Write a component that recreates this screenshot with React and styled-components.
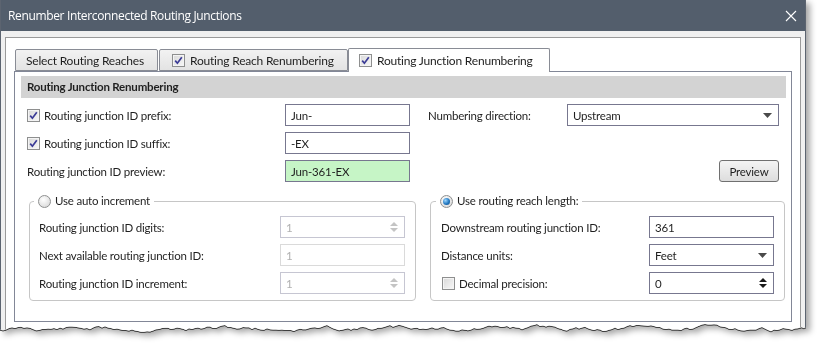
import React from 'react';
import styled, { createGlobalStyle } from 'styled-components';

const FONT = `Lato, "Open Sans", Arial, sans-serif`;
const TITLE_FONT = `"Open Sans", "Noto Sans", Arial, sans-serif`;

const GlobalStyle = createGlobalStyle`
  html, body {
    margin: 0;
    background: #fff;
  }
  body {
    font-family: ${FONT};
    font-size: 11.5px;
    letter-spacing: -0.2px;
    color: #1f1f1f;
  }
`;

// torn paper edge along the bottom of the screenshot
const tornEdge = (() => {
  let seed = 11;
  const rnd = () => {
    seed = (seed * 9301 + 49297) % 233280;
    return seed / 233280;
  };
  const pts = [];
  let y = 329;
  for (let x = 0; x <= 816; x += 3) {
    y += (rnd() - 0.5) * 3.2 + (328 - y) * 0.12;
    pts.push(`${x}px ${y.toFixed(1)}px`);
  }
  return `polygon(0 0, 816px 0, ${pts.reverse().join(', ')})`;
})();

const Shadow = styled.div`
  width: 816px;
  filter: drop-shadow(0 1px 0 rgba(50, 50, 50, 0.9)) drop-shadow(4px 3px 3px rgba(0, 0, 0, 0.35));
`;

const Window = styled.div`
  width: 806px;
  height: 344px;
  box-sizing: border-box;
  border-left: 1px solid #5c6470;
  border-right: 1px solid #5c6470;
  background: #f0f0f0;
  display: flex;
  flex-direction: column;
  clip-path: ${tornEdge};
`;

const TitleBar = styled.div`
  height: 31px;
  flex: none;
  background: #535e6c;
  color: #fff;
  display: flex;
  align-items: center;
  justify-content: space-between;
  padding: 0 8px 0 7px;
  font-family: ${TITLE_FONT};
  font-size: 12px;
  letter-spacing: -0.35px;
`;

const CloseIcon = () => (
  <svg width="12" height="12" viewBox="0 0 12 12">
    <path d="M1 1 L11 11 M11 1 L1 11" stroke="#fff" strokeWidth="1.1" fill="none" />
  </svg>
);

const Body = styled.div`
  flex: 1;
  padding: 6px 4px 0 4px;
  display: flex;
`;

const OuterPanel = styled.div`
  flex: 1;
  background: #fff;
  border: 1px solid #9a9a9a;
  border-bottom: none;
  padding: 10px 8px 0 8px;
`;

const TabStrip = styled.div`
  display: flex;
  align-items: flex-end;
  height: 23px;
  padding-left: 1px;
  gap: 1px;
`;

const Tab = styled.div`
  position: relative;
  box-sizing: border-box;
  width: ${p => p.$width}px;
  height: ${p => (p.$active ? 24 : 22)}px;
  margin-bottom: ${p => (p.$active ? -1 : 0)}px;
  margin-left: ${p => (p.$active ? -1 : 0)}px;
  z-index: ${p => (p.$active ? 1 : 0)};
  border: 1px solid #898c95;
  border-bottom: ${p => (p.$active ? 'none' : '1px solid #898c95')};
  border-radius: 2px 2px 0 0;
  background: ${p => (p.$active ? '#fff' : 'linear-gradient(#f2f2f2, #e3e3e3)')};
  display: flex;
  align-items: center;
  gap: 5px;
  padding-left: ${p => p.$pad}px;
  padding-bottom: ${p => (p.$active ? 1 : 0)}px;
  font-size: 12px;
  white-space: nowrap;
`;

const TabPanel = styled.div`
  border: 1px solid #828797;
  padding: 4px 5px 20px 6px;
`;

const SectionHeader = styled.div`
  height: 22px;
  line-height: 22px;
  background: #d3d3d3;
  padding-left: 6px;
  font-weight: 700;
`;

const FormGrid = styled.div`
  margin-top: 6px;
  padding-left: 6px;
  display: grid;
  grid-template-columns: 258px 125px 18px 139px 212px;
  grid-auto-rows: 22px;
  row-gap: 6px;
  align-items: center;
  grid-template-areas:
    'pfx pfxIn . dirL dir'
    'sfx sfxIn . . .'
    'prv prvIn . . btn';
`;

const Cell = styled.div`
  grid-area: ${p => p.$area};
  display: flex;
  align-items: center;
  gap: 4px;
  white-space: nowrap;
`;

const CheckBox = styled.span`
  width: 13px;
  height: 13px;
  flex: none;
  box-sizing: border-box;
  border: 1px solid #8e8f8f;
  box-shadow: inset 0 0 0 1px #f4f4f4;
  background: linear-gradient(135deg, #d8d8d8, #f8f8f8);
  display: inline-flex;
  align-items: center;
  justify-content: center;
  margin-left: ${p => p.$offset || 0}px;
`;

const Check = ({ checked, offset }) => (
  <CheckBox $offset={offset}>
    {checked && (
      <svg width="9" height="9" viewBox="0 0 9 9">
        <path d="M1.2 4.6 L3.4 7.2 L7.8 1.2" stroke="#3b3b96" strokeWidth="1.7" fill="none" />
      </svg>
    )}
  </CheckBox>
);

const Radio = styled.span`
  width: 13px;
  height: 13px;
  flex: none;
  box-sizing: border-box;
  border-radius: 50%;
  border: 1px solid #8e8f8f;
  background: radial-gradient(circle at 40% 35%, #ffffff, #d2d2d2);
  display: inline-flex;
  align-items: center;
  justify-content: center;

  &::after {
    content: '';
    display: ${p => (p.$checked ? 'block' : 'none')};
    width: 7px;
    height: 7px;
    border-radius: 50%;
    background: radial-gradient(circle at 35% 35%, #9bd6ff, #2277c0 55%, #0e4a84);
  }
`;

const TextBox = styled.div`
  grid-area: ${p => p.$area || 'auto'};
  height: 22px;
  box-sizing: border-box;
  border: 1px solid ${p => (p.$disabled ? (p.$faint ? '#dadada' : '#c6c6d2') : '#77778f')};
  background: ${p => (p.$ok ? '#c6f5c6' : '#fff')};
  color: ${p => (p.$disabled ? '#b0b0b0' : '#1f1f1f')};
  display: flex;
  align-items: center;
  justify-content: space-between;
  padding: 0 6px 0 5px;
`;

const Arrows = styled.span`
  display: flex;
  flex-direction: column;
  gap: 2px;
`;

const Spin = ({ color }) => (
  <Arrows>
    <svg width="8" height="4" viewBox="0 0 8 4">
      <polygon points="0,4 8,4 4,0" fill={color} />
    </svg>
    <svg width="8" height="4" viewBox="0 0 8 4">
      <polygon points="0,0 8,0 4,4" fill={color} />
    </svg>
  </Arrows>
);

const DropArrow = () => (
  <svg width="9" height="5" viewBox="0 0 9 5">
    <polygon points="0,0 9,0 4.5,5" fill="#4a4a4a" />
  </svg>
);

const Button = styled.button`
  grid-area: ${p => p.$area};
  justify-self: end;
  width: 60px;
  height: 22px;
  box-sizing: border-box;
  border: 1px solid #707070;
  border-radius: 3px;
  background: linear-gradient(#f4f4f4, #dddddd);
  font-family: ${FONT};
  font-size: 11.5px;
  letter-spacing: -0.2px;
  color: #1f1f1f;
  padding: 0;
`;

const GroupRow = styled.div`
  display: flex;
  gap: 14px;
  margin-top: 11px;
  padding-left: 8px;
`;

const Group = styled.fieldset`
  margin: 0;
  min-width: 0;
  width: ${p => p.$width}px;
  box-sizing: border-box;
  border: 1px solid #c6c6c6;
  border-radius: 4px;
  padding: 0 10px 6px ${p => p.$padLeft}px;
`;

const Legend = styled.legend`
  margin-left: -5px;
  padding: 0 4px;
  display: flex;
  align-items: center;
  gap: 4px;
  line-height: 16px;
`;

const GroupGrid = styled.div`
  margin-top: 7px;
  display: grid;
  grid-template-columns: 1fr 125px;
  grid-auto-rows: 22px;
  row-gap: 6px;
  align-items: center;
`;

const Label = styled.span`
  display: flex;
  align-items: center;
  gap: 4px;
  white-space: nowrap;
`;

export default function App() {
  return (
    <>
      <GlobalStyle />
      <Shadow>
        <Window>
          <TitleBar>
            <span>Renumber Interconnected Routing Junctions</span>
            <CloseIcon />
          </TitleBar>
          <Body>
            <OuterPanel>
              <TabStrip>
                <Tab $width={143} $pad={10}>Select Routing Reaches</Tab>
                <Tab $width={189} $pad={12}>
                  <Check checked /> Routing Reach Renumbering
                </Tab>
                <Tab $width={202} $pad={10} $active>
                  <Check checked /> Routing Junction Renumbering
                </Tab>
              </TabStrip>
              <TabPanel>
                <SectionHeader>Routing Junction Renumbering</SectionHeader>
                <FormGrid>
                  <Cell $area="pfx">
                    <Check checked /> Routing junction ID prefix:
                  </Cell>
                  <TextBox $area="pfxIn">Jun-</TextBox>
                  <Cell $area="dirL">Numbering direction:</Cell>
                  <TextBox $area="dir">
                    Upstream <DropArrow />
                  </TextBox>
                  <Cell $area="sfx">
                    <Check checked /> Routing junction ID suffix:
                  </Cell>
                  <TextBox $area="sfxIn">-EX</TextBox>
                  <Cell $area="prv">Routing junction ID preview:</Cell>
                  <TextBox $area="prvIn" $ok>Jun-361-EX</TextBox>
                  <Button $area="btn">Preview</Button>
                </FormGrid>
                <GroupRow>
                  <Group $width={387} $padLeft={9}>
                    <Legend>
                      <Radio /> Use auto increment
                    </Legend>
                    <GroupGrid>
                      <Label>Routing junction ID digits:</Label>
                      <TextBox $disabled>
                        1 <Spin color="#c4c4c4" />
                      </TextBox>
                      <Label>Next available routing junction ID:</Label>
                      <TextBox $disabled $faint>1</TextBox>
                      <Label>Routing junction ID increment:</Label>
                      <TextBox $disabled>
                        1 <Spin color="#c4c4c4" />
                      </TextBox>
                    </GroupGrid>
                  </Group>
                  <Group $width={355} $padLeft={10}>
                    <Legend>
                      <Radio $checked /> Use routing reach length:
                    </Legend>
                    <GroupGrid>
                      <Label>Downstream routing junction ID:</Label>
                      <TextBox>361</TextBox>
                      <Label>Distance units:</Label>
                      <TextBox>
                        Feet <DropArrow />
                      </TextBox>
                      <Label>
                        <Check offset={1} /> Decimal precision:
                      </Label>
                      <TextBox>
                        0 <Spin color="#1a1a1a" />
                      </TextBox>
                    </GroupGrid>
                  </Group>
                </GroupRow>
              </TabPanel>
            </OuterPanel>
          </Body>
        </Window>
      </Shadow>
    </>
  );
}
